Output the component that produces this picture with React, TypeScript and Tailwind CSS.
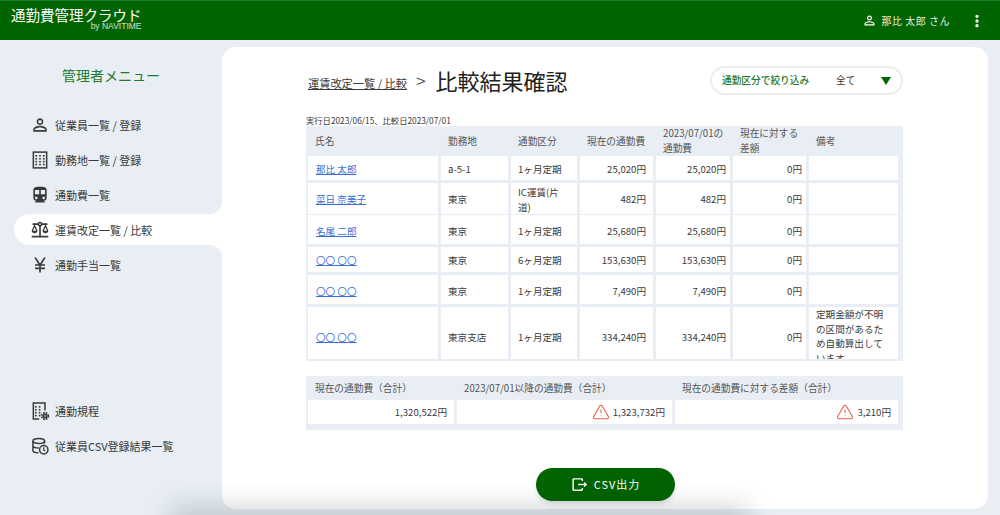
import { MdPersonOutline, MdDirectionsTransit, MdOutlineBalance, MdCurrencyYen } from "react-icons/md";
import { EllipsisVertical, TriangleAlert } from "lucide-react";
import type { ReactNode } from "react";

const dots = [7.5, 12, 16.5].flatMap((x) => [7, 10.5, 14, 17.5].map((y) => ({ x, y })));

function BuildingIcon() {
  return (
    <svg viewBox="0 0 24 24" className="w-5 h-5" fill="none" stroke="currentColor" strokeWidth="1.8">
      <rect x="4" y="2.5" width="16" height="19" />
      {dots.map((d) => (
        <rect key={`${d.x}-${d.y}`} x={d.x - 1} y={d.y - 1} width="2" height="2" fill="currentColor" stroke="none" />
      ))}
    </svg>
  );
}

function RuleIcon() {
  return (
    <svg viewBox="0 0 24 24" className="w-5 h-5" fill="none" stroke="currentColor" strokeWidth="1.8">
      <path d="M11 21.5H4v-19h14v9" />
      {dots.slice(0, 8).map((d) => (
        <rect key={`${d.x}-${d.y}`} x={d.x - 1.5} y={d.y - 1} width="2" height="2" fill="currentColor" stroke="none" />
      ))}
      <circle cx="18" cy="18" r="2" strokeWidth="2" />
      <circle cx="18" cy="18" r="4" strokeWidth="2" strokeDasharray="2 1.2" />
    </svg>
  );
}

function CsvIcon() {
  return (
    <svg viewBox="0 0 24 24" className="w-5 h-5" fill="none" stroke="currentColor" strokeWidth="1.8">
      <ellipse cx="10.5" cy="6" rx="7" ry="3" />
      <path d="M3.5 6v11c0 1.6 2.6 3 6.5 3M17.5 6v3M3.5 11.5c0 1.6 2.8 3 7 3M3.5 6" />
      <circle cx="16.5" cy="16.5" r="5" fill="#e8eef4" />
      <path d="M16.5 13.5v3.2l2 1.3" strokeWidth="1.5" />
    </svg>
  );
}

function ExportIcon() {
  return (
    <svg viewBox="0 0 24 24" className="w-[17px] h-[17px]" fill="none" stroke="currentColor" strokeWidth="2">
      <path d="M16 7V5a1 1 0 0 0-1-1H4a1 1 0 0 0-1 1v14a1 1 0 0 0 1 1h11a1 1 0 0 0 1-1v-2" />
      <path d="M10 12h9" />
      <path d="M19 9l3.5 3-3.5 3z" fill="currentColor" strokeWidth="1" />
    </svg>
  );
}

function MenuItem({ icon, label, active }: { icon: ReactNode; label: string; active?: boolean }) {
  return (
    <div className={`relative h-[31px] flex items-center gap-[5px] pl-4 text-[11px] ${active ? "bg-white rounded-l-2xl" : ""}`}>
      {active && (
        <>
          <span className="absolute right-0 bottom-full w-3 h-3 bg-white">
            <span className="block w-full h-full bg-[#e8eef4] rounded-br-xl" />
          </span>
          <span className="absolute right-0 top-full w-3 h-3 bg-white">
            <span className="block w-full h-full bg-[#e8eef4] rounded-tr-xl" />
          </span>
        </>
      )}
      {icon}
      <span className="pt-px">{label}</span>
    </div>
  );
}

const rows = [
  { name: "那比 太郎", place: "a-5-1", type: "1ヶ月定期", now: "25,020円", next: "25,020円", h: "h-[24px]", pt: "pt-[2px]" },
  { name: "菜日 奈美子", place: "東京", type: "IC運賃(片道)", now: "482円", next: "482円", h: "h-[29px]", pt: "pt-[2px]" },
  { name: "名尾 二郎", place: "東京", type: "1ヶ月定期", now: "25,680円", next: "25,680円", h: "h-[29px]", pt: "pt-1" },
  { name: "〇〇 〇〇", place: "東京", type: "6ヶ月定期", now: "153,630円", next: "153,630円", h: "h-[25px]", pt: "pt-[2px]" },
  { name: "〇〇 〇〇", place: "東京", type: "1ヶ月定期", now: "7,490円", next: "7,490円", h: "h-[29px]", pt: "pt-1" },
  { name: "〇〇 〇〇", place: "東京支店", type: "1ヶ月定期", now: "334,240円", next: "334,240円", h: "h-[52px]", pt: "pt-2", note: "定期金額が不明の区間があるため自動算出しています" },
];

const cols = "grid grid-cols-[130px_67px_66px_73px_74px_73px_89px] gap-[3px]";

export default function App() {
  return (
    <div className="relative w-[1000px] h-[515px] overflow-hidden bg-[#e8eef4] flex flex-col font-['Noto_Sans_CJK_JP','Noto_Sans',sans-serif] text-[#3a3a3a]">
      <header className="h-10 shrink-0 bg-[#006400] border-t border-[#1a7a3a] flex items-center justify-between pl-[11px] pr-[15px] text-white">
        <div className="flex flex-col items-end pb-1">
          <span className="text-[14.5px] leading-[14px]">通勤費管理クラウド</span>
          <span className="text-[8.5px] leading-[8px] font-['Liberation_Sans',sans-serif] text-white/80">by NAVITIME</span>
        </div>
        <div className="flex items-center">
          <MdPersonOutline className="w-[15px] h-[15px] mr-[5px]" />
          <span className="text-[10px] tracking-[0.5px] mr-[19px] text-white/90">那比 太郎 さん</span>
          <EllipsisVertical className="w-4 h-4" strokeWidth={3} />
        </div>
      </header>
      <div className="flex-1 flex min-h-0 pt-[7px] pb-[6px] pr-[13px]">
        <aside className="w-[222px] shrink-0 flex flex-col">
          <h2 className="text-[14px] leading-5 text-[#1f7a2e] text-center mt-[18px] mb-6">管理者メニュー</h2>
          <nav className="flex flex-col gap-1 ml-[14px]">
            <MenuItem icon={<MdPersonOutline className="w-5 h-5" />} label="従業員一覧 / 登録" />
            <MenuItem icon={<BuildingIcon />} label="勤務地一覧 / 登録" />
            <MenuItem icon={<MdDirectionsTransit className="w-5 h-5" />} label="通勤費一覧" />
            <MenuItem icon={<MdOutlineBalance className="w-5 h-5" />} label="運賃改定一覧 / 比較" active />
            <MenuItem icon={<MdCurrencyYen className="w-5 h-5" />} label="通勤手当一覧" />
          </nav>
          <nav className="flex flex-col gap-1 ml-[14px] mt-[115px]">
            <MenuItem icon={<RuleIcon />} label="通勤規程" />
            <MenuItem icon={<CsvIcon />} label="従業員CSV登録結果一覧" />
          </nav>
        </aside>
        <main className="flex-1 bg-white rounded-[14px] flex flex-col pl-[84px] pr-[85px]">
          <div className="flex items-center justify-between mt-4 h-[34px]">
            <div className="flex items-center">
              <span className="text-[11.2px] underline ml-[2px] mt-[7px]">運賃改定一覧 / 比較</span>
              <span className="text-[18px] font-light ml-[9px] mr-[10px]">&gt;</span>
              <span className="text-[22px] text-[#222]">比較結果確認</span>
            </div>
            <div className="w-[193px] h-[29px] border-2 border-[#e8eef4] rounded-full flex items-center pl-[10px] pr-[10px] text-[9.7px]">
              <span className="text-[#1f7a2e] font-medium w-[114px]">通勤区分で絞り込み</span>
              <span className="flex-1">全て</span>
              <span className="w-0 h-0 mt-[2px] border-x-[5.5px] border-x-transparent border-t-[8px] border-t-[#006400]" />
            </div>
          </div>
          <div className="text-[8.3px] leading-3 mt-[17px]">実行日2023/06/15、比較日2023/07/01</div>
          <div className="bg-[#e8eef4] pl-[2px] w-[597px] h-[235px] overflow-hidden">
            <div className={`${cols} h-[30px] items-center text-[9.7px] leading-[15px] text-[#555]`}>
              <span className="pl-[7px]">氏名</span>
              <span className="pl-[7px]">勤務地</span>
              <span className="pl-[7px]">通勤区分</span>
              <span className="pl-[7px]">現在の通勤費</span>
              <span className="pl-[7px]">2023/07/01の通勤費</span>
              <span className="pl-[7px]">現在に対する差額</span>
              <span className="pl-[7px]">備考</span>
            </div>
            <div className="flex flex-col gap-[3px]">
              {rows.map((r, i) => (
                <div key={i} className={`${cols} ${r.h} text-[9.6px] leading-[14.7px]`}>
                  <div className={`bg-white flex items-center pl-2 text-[#3b6fd6] underline ${r.pt}`}>{r.name}</div>
                  <div className={`bg-white flex items-center pl-[7px] ${r.pt}`}>{r.place}</div>
                  <div className={`bg-white flex items-center pl-[7px] pr-2 ${r.pt}`}>{r.type}</div>
                  <div className={`bg-white flex items-center justify-end pr-[7px] ${r.pt}`}>{r.now}</div>
                  <div className={`bg-white flex items-center justify-end pr-1 ${r.pt}`}>{r.next}</div>
                  <div className={`bg-white flex items-center justify-end pr-1 ${r.pt}`}>0円</div>
                  <div className="bg-white pl-[7px] pr-2 overflow-hidden">{r.note}</div>
                </div>
              ))}
            </div>
          </div>
          <div className="bg-[#e8eef4] w-[597px] h-[54px] mt-[15px] pl-[2px]">
            <div className="grid grid-cols-[146px_215px_223px] gap-[3px] h-6 items-center text-[9.7px] text-[#555]">
              <span className="pl-[7px]">現在の通勤費（合計）</span>
              <span className="pl-[7px]">2023/07/01以降の通勤費（合計）</span>
              <span className="pl-[7px]">現在の通勤費に対する差額（合計）</span>
            </div>
            <div className="grid grid-cols-[146px_215px_223px] gap-[3px] h-6 text-[9.6px]">
              <div className="bg-white flex items-center justify-end pr-[7px]">1,320,522円</div>
              <div className="bg-white flex items-center justify-end gap-[3px] pr-[7px]">
                <TriangleAlert className="w-[18px] h-[18px] text-[#e2604f]" strokeWidth={1.4} />
                1,323,732円
              </div>
              <div className="bg-white flex items-center justify-end gap-[3px] pr-[7px]">
                <TriangleAlert className="w-[18px] h-[18px] text-[#e2604f]" strokeWidth={1.4} />
                3,210円
              </div>
            </div>
          </div>
          <button className="self-center mt-[38px] ml-[2px] w-[139px] h-[33px] rounded-full bg-[#006400] text-white text-[11px] tracking-[1px] flex items-center justify-center gap-[6px] shadow-md">
            <ExportIcon />
            CSV出力
          </button>
        </main>
      </div>
      {/* soft shadow rising from below the window */}
      <div className="pointer-events-none absolute left-[180px] w-[560px] bottom-[-12px] h-3 shadow-[0_0_26px_8px_rgba(40,50,60,0.22)]" />
    </div>
  );
}
